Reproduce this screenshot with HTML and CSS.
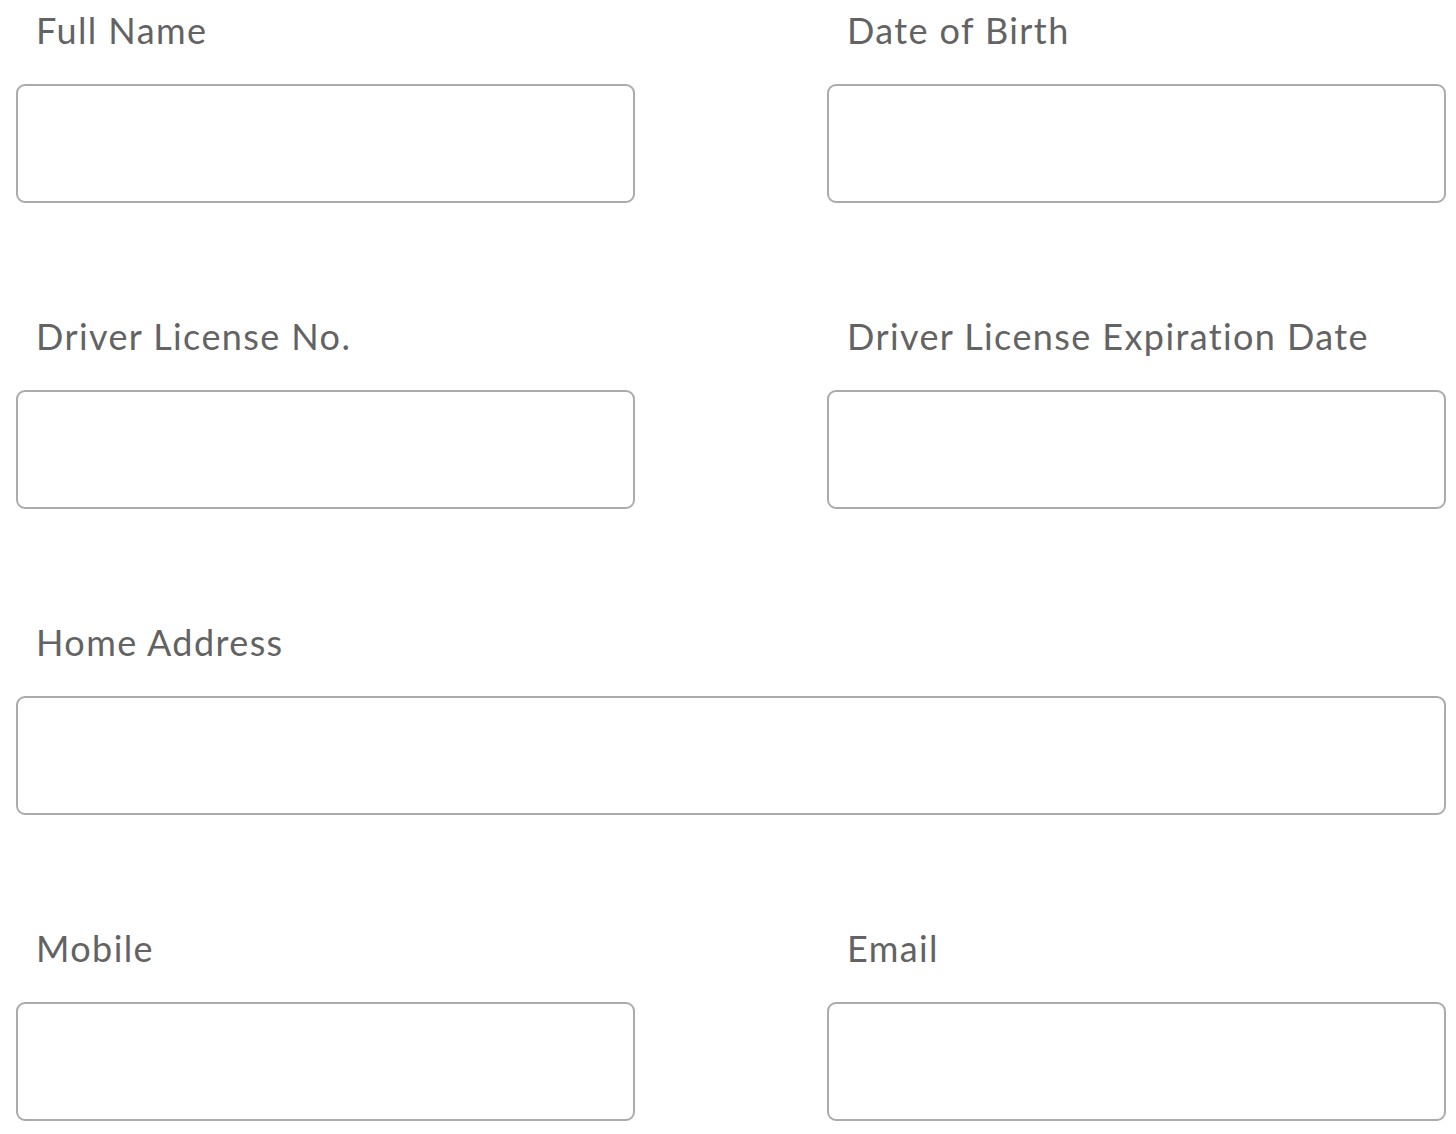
FILE: index.html
```html
<!DOCTYPE html>
<html lang="en">
<head>
<meta charset="utf-8">
<title>Form</title>
<link rel="stylesheet" href="styles.css">
</head>
<body>
<form class="form">
  <div class="field">
    <label class="label">Full Name</label>
    <div class="box"></div>
  </div>
  <div class="field">
    <label class="label">Date of Birth</label>
    <div class="box"></div>
  </div>
  <div class="field">
    <label class="label">Driver License No.</label>
    <div class="box"></div>
  </div>
  <div class="field">
    <label class="label">Driver License Expiration Date</label>
    <div class="box"></div>
  </div>
  <div class="field field-wide">
    <label class="label">Home Address</label>
    <div class="box"></div>
  </div>
  <div class="field">
    <label class="label">Mobile</label>
    <div class="box"></div>
  </div>
  <div class="field">
    <label class="label">Email</label>
    <div class="box"></div>
  </div>
</form>
</body>
</html>
```
FILE: styles.css
```css
html, body {
  margin: 0;
  padding: 0;
  background: #ffffff;
}

.form {
  display: grid;
  grid-template-columns: 1fr 1fr;
  column-gap: 192px;
  row-gap: 103px;
  padding: 0 10px 0 16px;
  font-family: Lato, "Noto Sans", sans-serif;
}

.field {
  display: flex;
  flex-direction: column;
}

.field-wide {
  grid-column: 1 / -1;
}

.label {
  display: block;
  font-size: 36px;
  line-height: 44px;
  letter-spacing: 1.4px;
  padding: 8px 0 0 20px;
  margin-bottom: 32px;
  color: #636363;
}

.box {
  height: 119px;
  box-sizing: border-box;
  border: 2px solid #ababab;
  border-radius: 9px;
  background: #ffffff;
}
```
